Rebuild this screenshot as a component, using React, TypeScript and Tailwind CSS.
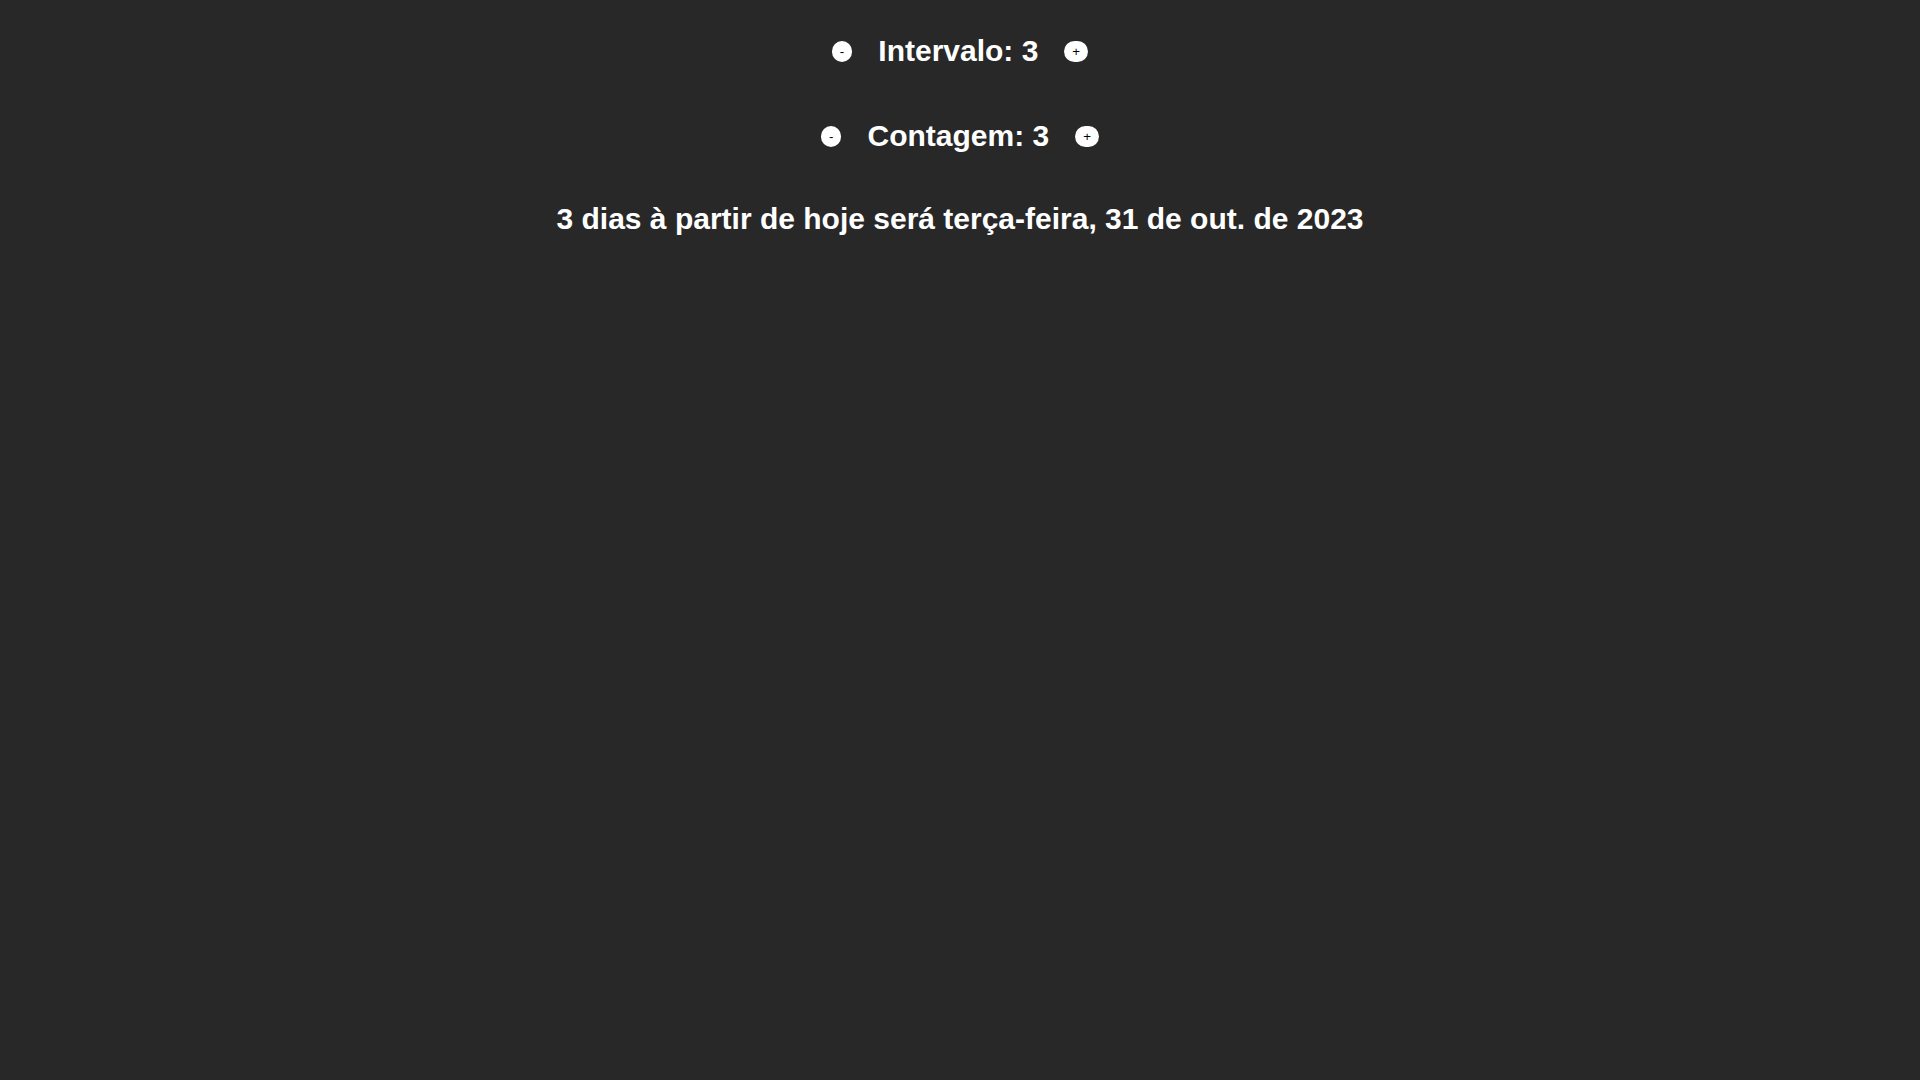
import { useState } from 'react';

function Stepper({ label, value, onChange }: { label: string; value: number; onChange: (v: number) => void }) {
  return (
    <div className="flex items-center justify-center gap-[26px]">
      <button
        onClick={() => onChange(value - 1)}
        className="rounded-full bg-white px-2 py-[3px] text-[13.33px] leading-[15px] text-black"
      >
        -
      </button>
      <span className="text-3xl font-bold">
        {label}: {value}
      </span>
      <button
        onClick={() => onChange(value + 1)}
        className="rounded-full bg-white px-2 py-[3px] text-[13.33px] leading-[15px] text-black"
      >
        +
      </button>
    </div>
  );
}

export default function App() {
  const [intervalo, setIntervalo] = useState(3);
  const [contagem, setContagem] = useState(3);

  return (
    <div
      className="flex min-h-screen flex-col items-center bg-[#282828] text-white"
      style={{ fontFamily: '"Liberation Sans", Arial, sans-serif' }}
    >
      <div className="mt-[33px]">
        <Stepper label="Intervalo" value={intervalo} onChange={setIntervalo} />
      </div>
      <div className="mt-[49px]">
        <Stepper label="Contagem" value={contagem} onChange={setContagem} />
      </div>
      <p className="mt-[47px] text-3xl font-bold">
        3 dias à partir de hoje será terça-feira, 31 de out. de 2023
      </p>
    </div>
  );
}
